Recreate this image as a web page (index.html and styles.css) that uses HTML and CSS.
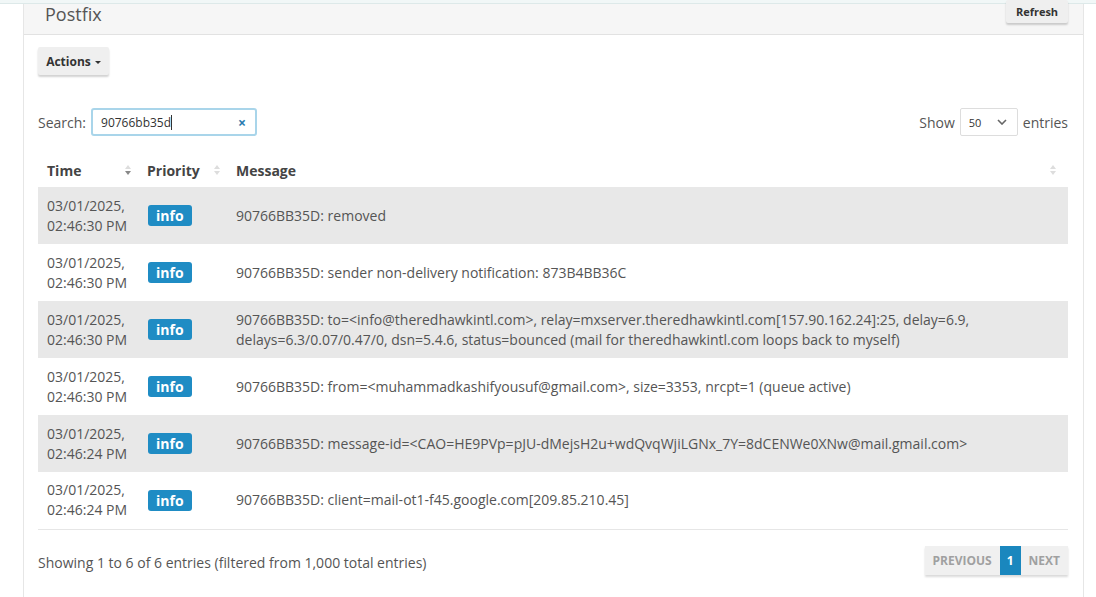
FILE: index.html
```html
<!DOCTYPE html>
<html>
<head>
<meta charset="utf-8">
<link rel="stylesheet" href="styles.css">
</head>
<body>
<div class="topbar"></div>
<div class="panel">
  <div class="panel-heading">
    <span class="title">Postfix</span>
    <button class="btn btn-refresh">Refresh</button>
  </div>
  <div class="panel-body">
    <div class="actions-row">
      <button class="btn btn-actions">Actions <span class="caret"></span></button>
    </div>
    <div class="controls">
      <label class="search">Search:
        <span class="search-box"><span class="search-text">90766bb35d</span><span class="cursor"></span><span class="clear">×</span></span>
      </label>
      <div class="length">Show
        <span class="select">50
          <svg class="chev" width="10" height="6" viewBox="0 0 10 6"><path d="M1 1l4 4 4-4" fill="none" stroke="#666" stroke-width="1.6"/></svg>
        </span>
        entries
      </div>
    </div>
    <table class="log">
      <thead>
        <tr>
          <th class="c-time">Time <span class="sort"><i class="up"></i><i class="down on"></i></span></th>
          <th class="c-pri">Priority <span class="sort"><i class="up"></i><i class="down"></i></span></th>
          <th class="c-msg">Message <span class="sort"><i class="up"></i><i class="down"></i></span></th>
        </tr>
      </thead>
      <tbody>
        <tr class="odd"><td>03/01/2025,<br>02:46:30 PM</td><td><span class="badge">info</span></td><td>90766BB35D: removed</td></tr>
        <tr><td>03/01/2025,<br>02:46:30 PM</td><td><span class="badge">info</span></td><td>90766BB35D: sender non-delivery notification: 873B4BB36C</td></tr>
        <tr class="odd"><td>03/01/2025,<br>02:46:30 PM</td><td><span class="badge">info</span></td><td>90766BB35D: to=&lt;info@theredhawkintl.com&gt;, relay=mxserver.theredhawkintl.com[157.90.162.24]:25, delay=6.9,<br>delays=6.3/0.07/0.47/0, dsn=5.4.6, status=bounced (mail for theredhawkintl.com loops back to myself)</td></tr>
        <tr><td>03/01/2025,<br>02:46:30 PM</td><td><span class="badge">info</span></td><td>90766BB35D: from=&lt;muhammadkashifyousuf@gmail.com&gt;, size=3353, nrcpt=1 (queue active)</td></tr>
        <tr class="odd"><td>03/01/2025,<br>02:46:24 PM</td><td><span class="badge">info</span></td><td>90766BB35D: message-id=&lt;CAO=HE9PVp=pJU-dMejsH2u+wdQvqWjiLGNx_7Y=8dCENWe0XNw@mail.gmail.com&gt;</td></tr>
        <tr><td>03/01/2025,<br>02:46:24 PM</td><td><span class="badge">info</span></td><td>90766BB35D: client=mail-ot1-f45.google.com[209.85.210.45]</td></tr>
      </tbody>
    </table>
    <div class="footer">
      <div class="info-text">Showing 1 to 6 of 6 entries (filtered from 1,000 total entries)</div>
      <div class="pager">
        <span class="pg">Previous</span><span class="pg cur">1</span><span class="pg">Next</span>
      </div>
    </div>
  </div>
</div>
</body>
</html>
```

FILE: styles.css
```css
* { box-sizing: border-box; }
body {
  margin: 0;
  font-family: "Open Sans", "Noto Sans", sans-serif;
  font-size: 14px;
  color: #555;
  background: #fff;
}
.topbar {
  height: 4px;
  background: #f1f7f7;
  border-bottom: 1px solid #dde9e9;
}
.panel {
  margin-left: 23px;
  width: 1061px;
  border-left: 1px solid #e6e6e6;
  border-right: 1px solid #e6e6e6;
}
.panel-heading {
  height: 31px;
  background: #f6f6f6;
  border-bottom: 1px solid #e2e2e2;
  display: flex;
  justify-content: space-between;
  align-items: flex-start;
  padding: 0 15px 0 21px;
}
.title {
  font-size: 18px;
  line-height: 22px;
  color: #555;
  margin-top: -1px;
}
.btn {
  font-family: "Open Sans", "Noto Sans", sans-serif;
  font-weight: 700;
  color: #333;
  background: #efefef;
  border: none;
  border-radius: 2px;
  box-shadow: 0 2px 2px rgba(0,0,0,0.18);
  cursor: pointer;
}
.btn-refresh {
  font-size: 11px;
  height: 23px;
  width: 62px;
  margin-top: -4px;
  padding: 0;
}
.panel-body {
  padding: 12px 15px 22px 14px;
}
.btn-actions {
  font-size: 12px;
  height: 28px;
  width: 71px;
  padding: 0;
}
.caret {
  display: inline-block;
  width: 0; height: 0;
  border-left: 3px solid transparent;
  border-right: 3px solid transparent;
  border-top: 3px solid #333;
  vertical-align: middle;
  margin-left: 1px;
}
.controls {
  display: flex;
  justify-content: space-between;
  align-items: center;
  margin-top: 33px;
  height: 28px;
}
.search {
  display: flex;
  align-items: center;
  gap: 5px;
}
.search-box {
  display: flex;
  align-items: center;
  width: 166px;
  height: 28px;
  border: 2px solid #a9d5ea;
  border-radius: 3px;
  padding: 0 9px 0 8px;
  font-size: 12px;
  color: #333;
}
.cursor {
  width: 1px; height: 15px;
  background: #333;
}
.clear {
  margin-left: auto;
  color: #2a7ab0;
  font-weight: 700;
  font-size: 14px;
}
.length {
  display: flex;
  align-items: center;
  gap: 5px;
}
.select {
  display: flex;
  align-items: center;
  justify-content: space-between;
  width: 58px;
  height: 28px;
  border: 1px solid #ddd;
  border-radius: 2px;
  padding: 0 10px 0 8px;
  font-size: 11px;
  color: #333;
}
table.log {
  width: 100%;
  border-collapse: collapse;
  margin-top: 18px;
}
th {
  text-align: left;
  font-weight: 700;
  color: #444;
  height: 33px;
  padding: 0 9px;
  position: relative;
}
th.c-time { width: 100px; }
th.c-pri { width: 89px; }
.sort {
  position: absolute;
  right: 7px;
  top: 11px;
  display: flex;
  flex-direction: column;
  gap: 2px;
}
th.c-msg .sort { right: 12px; }
.sort i {
  width: 0; height: 0;
  border-left: 3px solid transparent;
  border-right: 3px solid transparent;
}
.sort .up { border-bottom: 4px solid #ddd; }
.sort .down { border-top: 4px solid #ddd; }
.sort .down.on { border-top-color: #888; }
td {
  padding: 8px 9px;
  line-height: 20px;
  height: 57px;
  vertical-align: middle;
}
tr.odd td { background: #e8e8e8; }
tbody tr:last-child td { border-bottom: 1px solid #e6e6e6; }
.badge {
  display: inline-block;
  background: #1f8cc4;
  color: #fff;
  font-weight: 700;
  font-size: 14px;
  line-height: 21px;
  padding: 0 8px;
  border-radius: 3px;
  margin-left: 1px;
}
.footer {
  display: flex;
  justify-content: space-between;
  align-items: center;
  margin-top: 16px;
  height: 30px;
}
.info-text { padding-top: 3px; }
.pager {
  display: flex;
  box-shadow: 0 2px 2px rgba(0,0,0,0.15);
  background: #f0f0f0;
}
.pg {
  font-size: 12px;
  font-weight: 700;
  text-transform: uppercase;
  color: #a0a0a0;
  height: 29px;
  line-height: 29px;
  padding: 0 8px;
}
.pg.cur {
  background: #1a87be;
  color: #fff;
  padding: 0 7px;
}
```
